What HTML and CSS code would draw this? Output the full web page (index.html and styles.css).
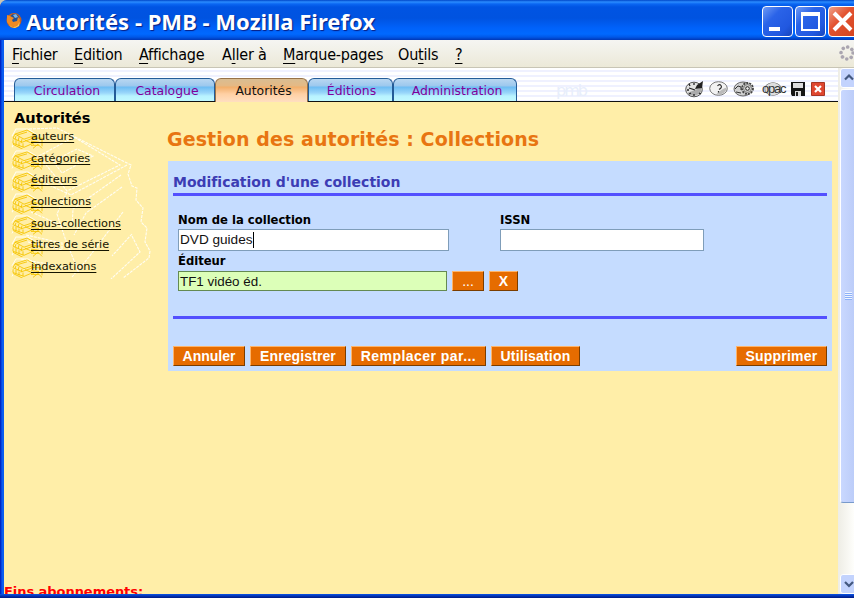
FILE: index.html
```html
<!DOCTYPE html>
<html lang="fr">
<head>
<meta charset="utf-8">
<title>Autorités - PMB - Mozilla Firefox</title>
<link rel="stylesheet" href="styles.css">
</head>
<body>
<div class="window">
  <header class="titlebar">
    <svg class="firefox" viewBox="0 0 18 18"><circle cx="9" cy="8.500" r="7.500" fill="#c9601c"/><circle cx="9.500" cy="7" r="5" fill="#1f4f96"/><path d="M2 3l3 1 2 1 2 1-2 2 1 2 4-1 1-4 2 2-1 5-4 3-5-1-3-4z" fill="#ef8a24"/><path d="M8 3l3-1 2 3-3 1z" fill="#7ab6e8"/><path d="M4 13q5 4 9 0l2-4-1 5-4 2-4-1z" fill="#ffd05a"/></svg>
    <h1>Autorités - PMB - Mozilla Firefox</h1>
    <div class="controls">
      <span class="control"><svg viewBox="0 0 31 32"><path d="M7 21h11v4H7z" fill="#fff"/></svg></span>
      <span class="control"><svg viewBox="0 0 31 32"><path d="M6 6h19v19H6zM8 10v13h15V10z" fill="#fff" fill-rule="evenodd"/></svg></span>
      <span class="control close"><svg viewBox="0 0 31 32"><path d="M6 7l17 17M23 7L6 24" stroke="#fff" stroke-width="4"/></svg></span>
    </div>
  </header>
  <nav class="menubar">
    <span class="m1"><u>F</u>ichier</span><span class="m2"><u>E</u>dition</span><span class="m3"><u>A</u>ffichage</span><span class="m4">A<u>l</u>ler à</span><span class="m5"><u>M</u>arque-pages</span><span class="m6">Ou<u>t</u>ils</span><span class="m7"><u>?</u></span>
    <svg class="throbber" viewBox="0 0 16 16"><circle cx="8" cy="8" r="6" fill="none" stroke="#aaa5b0" stroke-width="3.600" stroke-linecap="round" stroke-dasharray="0.010 4.702"/></svg>
  </nav>
  <div class="viewport">
    <div class="page">
      <div class="topbar">
        <nav class="tabs">
          <a class="tab t1">Circulation</a><a class="tab t2">Catalogue</a><a class="tab t3 active">Autorités</a><a class="tab t4">Éditions</a><a class="tab t5">Administration</a>
        </nav>
        <span class="ghost">pmb</span>
        <div class="tools">
          <svg class="i1" viewBox="0 0 20 18"><ellipse cx="9" cy="9.500" rx="8.300" ry="7.300" fill="#e2e2e2" stroke="#555"/><path d="M2 13q7 6 14-1l1-5-7 3z" fill="#aaa"/><path d="M10 9l2-4 6-4-1 7z" fill="#222"/><path d="M10 10L4 8M9 3v2M2 10h2M9 14v2M4 4l1 2M14 13l2 1M4 14l2-1" stroke="#222" stroke-width="1.300"/></svg>
          <svg class="i2" viewBox="0 0 20 18"><ellipse cx="9.500" cy="8.500" rx="8.800" ry="6.800" fill="#f2f2f2" stroke="#777"/><path d="M7 14.500q9 1 11-7-5 1-11 7z" fill="#bbb"/><path d="M8.500 6q2-2.500 3.500-.5t-2 4M9.500 11v1.500" fill="none" stroke="#333" stroke-width="1.200"/></svg>
          <svg class="i3" viewBox="0 0 22 18"><ellipse cx="10" cy="9" rx="9" ry="7" fill="#d0d0d0" stroke="#666"/><circle cx="14.500" cy="8.500" r="5.500" fill="#ddd" stroke="#444" stroke-width="1.800" stroke-dasharray="2 1"/><circle cx="14.500" cy="8.500" r="4" fill="#ccc" stroke="#666" stroke-width=".8"/><circle cx="14.500" cy="8.500" r="1.800" fill="#eee" stroke="#222"/><path d="M2 9l3-3 3 1v3M3 12l5 1" fill="none" stroke="#333"/></svg>
          <span class="opac">opac</span>
          <svg class="i5" viewBox="0 0 14 16"><path d="M0 1h14v14H1l-1-2z" fill="#151515"/><path d="M2 2h10v5H2zM4 10h6v5H4z" fill="#ddd"/><path d="M5 11h2v4H5z" fill="#222"/></svg>
          <svg class="i6" viewBox="0 0 14 14"><path d="M.5.500h13v13H.5z" fill="#df4630" stroke="#a73524"/><path d="M4 4l6 6M10 4l-6 6" stroke="#fff" stroke-width="2.200"/></svg>
        </div>
      </div>
      <div class="columns">
        <aside class="sidebar">
          <h2>Autorités</h2>
          <div class="links">
            <svg class="sketch" viewBox="0 0 145 152" fill="none" stroke="#fffdf2" stroke-width="1.100" stroke-dasharray="3 1"><path d="M18 2l28-1 74 37-3 9 4 12 5 2-1 12 7 8-2 14 6 6-2 14 5 9-1 7-26 20M116 38L60 68 20 50M28 29l35-19 46 28-53 26zM42 34l24-12 16 7-31 17zM110 48l-48 34-1 18M111 60L75 86l-12 22M112 85L78 130l-17 20M121 107l-20 22M56 65l-10 22 10 30M20 85l34 15M15 108l36 8v7l-34-8M10 132l47 9M56 116l12 30M121 109l8 16-29 27"/></svg>
            <ul>
              <li><a>auteurs</a></li><li><a>catégories</a></li><li><a>éditeurs</a></li><li><a>collections</a></li><li><a>sous-collections</a></li><li><a>titres de série</a></li><li><a>indexations</a></li>
            </ul>
          </div>
        </aside>
        <main>
          <h2 class="heading">Gestion des autorités : Collections</h2>
          <form class="panel">
            <h3>Modification d'une collection</h3>
            <div class="fields">
              <div class="field name"><label>Nom de la collection</label><div class="input">DVD guides<i class="caret"></i></div></div>
              <div class="field"><label>ISSN</label><div class="input issn"></div></div>
            </div>
            <div class="field publisher"><label>Éditeur</label>
              <div class="line"><div class="input green">TF1 vidéo éd.</div><button type="button" class="b-more">...</button><button type="button" class="b-x">X</button></div>
            </div>
            <div class="actions"><button type="button" class="b1">Annuler</button><button type="button" class="b2">Enregistrer</button><button type="button" class="b3">Remplacer par...</button><button type="button" class="b4">Utilisation</button><button type="button" class="b5">Supprimer</button></div>
          </form>
        </main>
      </div>
      <p class="alert">Fins abonnements:</p>
    </div>
    <div class="scrollbar">
      <span class="arrow"><svg viewBox="0 0 17 17"><path d="M5 10.500l4-4 4 4" fill="none" stroke="#43587f" stroke-width="2.200"/></svg></span>
      <span class="thumb"><i></i></span>
      <span class="arrow down"><svg viewBox="0 0 17 17"><path d="M5 7l4 4 4-4" fill="none" stroke="#43587f" stroke-width="2.200"/></svg></span>
    </div>
  </div>
</div>
</body>
</html>
```
FILE: styles.css
```css
* { box-sizing: border-box; }
body { margin: 0; overflow: hidden; font-family: "DejaVu Sans", sans-serif; background: #c9c5b5; }
h1, h2, h3, p, ul { margin: 0; padding: 0; }
svg { display: block; }
.window { width: 854px; height: 598px; display: flex; flex-direction: column; overflow: hidden; padding-left: 4px; border-radius: 7px 0 0 0; background: linear-gradient(90deg, #001bb8 0, #0030d0 1px, #0a5cf0 2px, #0a5cf0 4px); }
.titlebar { height: 40px; flex: none; margin-left: -4px; padding: 6px 0 0 5px; display: flex; border-radius: 7px 0 0 0; background: linear-gradient(#0046c8 0, #2b8cff 2px, #0a66f2 4px, #0054e3 7px, #0053e0 18px, #0062fa 28px, #0069ff 34px, #0058e8 37px, #0037b6 40px); overflow: hidden; }
.firefox { width: 18px; height: 18px; margin-top: 6px; flex: none; }
h1 { margin-left: 3px; width: 736px; flex: none; white-space: nowrap; font: bold 22px/31px "Noto Sans", sans-serif; letter-spacing: .02px; color: #fff; text-shadow: 1px 1px 1px #071d80; }
.controls { display: flex; gap: 2px; flex: none; }
.control { width: 31px; height: 31px; flex: none; border: 1px solid #fff; border-radius: 4px; background: linear-gradient(135deg, #6f9bf5, #2a63e8 35%, #2158e0 75%, #1645bc); }
.control svg { width: 31px; height: 32px; margin: -1px; }
.close { background: linear-gradient(135deg, #f0a088, #e35330 40%, #d3431e); }
.menubar { height: 28px; flex: none; display: flex; background: linear-gradient(#f5f5f2, #ece9d8); border-bottom: 1px solid #c8c5b5; font: 16px/29px "DejaVu Sans Condensed", "DejaVu Sans", sans-serif; font-stretch: condensed; letter-spacing: -.2px; color: #000; padding-left: 8px; }
.menubar span { white-space: nowrap; flex: none; }
.menubar u { text-underline-offset: 3px; text-decoration-thickness: 1px; }
.m1 { width: 62px; } .m2 { width: 65px; } .m3 { width: 83px; } .m4 { width: 61px; } .m5 { width: 115px; } .m6 { width: 57px; }
.throbber { width: 16px; height: 16px; margin: 5px 0 0 377px; flex: none; }
.viewport { height: 526px; display: flex; flex: none; }
.page { width: 834px; height: 526px; overflow: hidden; background: #ffeea8; flex: none; }
.topbar { height: 34px; display: flex; align-items: flex-end; padding-left: 10px; border-bottom: 1px solid #111; background: repeating-linear-gradient(#fff 0 2px, #eff1ff 2px 4px, #fff 4px 5px); }
.tabs { display: flex; height: 23px; }
.tab { height: 23px; border: 1px solid #245c98; border-bottom: 0; border-radius: 6px 6px 0 0; background: linear-gradient(#b9d7f1 0, #9cc8ee 7px, #6dbcf3 8px, #9ad7fa 14px, #b8f3ff 17px, #c0f8ff); color: #800099; font-size: 12.4px; line-height: 23px; text-align: center; white-space: nowrap; padding-left: 6px; }
.t1 { width: 101px; padding-left: 5px; } .t2 { width: 100px; padding-left: 4px; } .t3 { width: 93px; } .t4 { width: 85px; padding-left: 2px; } .t5 { width: 124px; padding-left: 4px; }
.active { height: 24px; color: #111; border-color: #987348; background: linear-gradient(#d9bd92 0, #e5b984 7px, #f1ae6a 8px, #ffd0a4 15px, #ffdfc1); padding-left: 4px; }
.ghost { font: 16px/20px "DejaVu Sans", sans-serif; letter-spacing: -2px; color: #e8eefb; margin-left: 39px; width: 129px; }
.tools { display: flex; height: 24px; align-items: center; }
.i1 { width: 20px; height: 18px; } .i2 { width: 20px; height: 18px; margin-left: 4px; } .i3 { width: 22px; height: 18px; margin-left: 4px; }
.opac { font: 13px/16px "Liberation Sans", sans-serif; letter-spacing: -1.2px; width: 23px; margin: 0 0 0 7px; color: #333; background: radial-gradient(ellipse 9px 7px at 11px 8px, #ddd 80%, #888 90%, transparent 100%); }
.i5 { width: 14px; height: 16px; margin-left: 6px; } .i6 { width: 14px; height: 14px; margin-left: 6px; }
.columns { display: flex; height: 482px; }
.sidebar { width: 164px; padding: 6px 0 0 7px; flex: none; }
.sidebar h2 { font-size: 14.6px; line-height: 19px; margin-left: 3px; color: #000; }
.links { position: relative; height: 152px; }
.sketch { position: absolute; left: 0; top: 0; width: 145px; height: 152px; }
.sidebar ul { position: relative; list-style: none; }
.sidebar li { height: 21.65px; padding-left: 20px; font-size: 11.3px; line-height: 20px; white-space: nowrap; background: url("data:image/svg+xml,%3Csvg xmlns='http://www.w3.org/2000/svg' width='34' height='22' fill='none'%3E%3Cpath d='M1 9L5 2l12 0 8 5M1 14l2-4M1 20l2-4' stroke='%23fffdf2'/%3E%3Cpath d='M4 7l12-4 9 5-12 4zM6 8l10-3M4 7l-2 4 9 4 14-5M2 12v4l11 4 9-4M2 17l10 5M5 9l-1 3M8 10l-1 4M11 12l-1 4M5 13v4M8 15v4M12 16v4M14 13l9 4M20 11h11v8M20 14l8 1M22 21l5-4 4 4M20 18h8' stroke='%23f5c400' stroke-width='.9'/%3E%3C/svg%3E") no-repeat 0 0; color: #151500; }
.sidebar a { text-decoration: underline; text-underline-offset: 2px; text-decoration-thickness: 1px; text-decoration-skip-ink: none; }
.heading { font-size: 19px; line-height: 24px; letter-spacing: .09px; color: #e87511; margin: 25px 0 0 -1px; white-space: nowrap; }
main { width: 664px; }
.panel { margin-top: 10px; height: 210px; background: #c5dcff; padding: 10px 5px 0; }
h3 { font-size: 14px; line-height: 22px; height: 25px; letter-spacing: -.02px; color: #3c3cb4; border-bottom: 3px solid #5350ff; white-space: nowrap; }
.fields { display: flex; margin: 16px 0 0 5px; }
.field label { display: block; font-size: 11.6px; line-height: 17px; font-weight: bold; color: #000; white-space: nowrap; }
.name { width: 322px; }
.input { width: 271px; height: 22px; border: 1px solid #7f9db9; background: #fff; padding-left: 1px; font: 13.6px/19px "Liberation Sans", sans-serif; color: #111; display: flex; align-items: flex-start; }
.issn { width: 204px; }
.caret { width: 1px; height: 16px; background: #000; margin-top: 2px; }
.publisher { margin: 2px 0 0 5px; }
.line { display: flex; height: 20px; margin-top: 1px; }
.green { width: 269px; height: 20px; background: #dcffb8; border-color: #648a52; font-size: 13.4px; }
button { height: 20px; padding: 0; border: 1px solid; border-color: #ffb468 #7a3d00 #7a3d00 #ffb468; background: #e66c00; color: #fff; font: bold 14px/18px "Liberation Sans", sans-serif; white-space: nowrap; }
.b-more { width: 32px; margin-left: 5px; font-weight: normal; } .b-x { width: 29px; margin-left: 5px; }
.actions { margin-top: 25px; border-top: 3px solid #5350ff; padding-top: 27px; display: flex; }
.b1 { width: 72px; margin-right: 5px; } .b2 { width: 96px; margin-right: 5px; letter-spacing: .1px; } .b3 { width: 135px; margin-right: 5px; letter-spacing: .45px; } .b4 { width: 89px; letter-spacing: .2px; } .b5 { width: 91px; margin-left: auto; letter-spacing: .2px; }
.alert { color: #f00; font-size: 13px; line-height: 16px; font-weight: bold; letter-spacing: -.05px; }
.scrollbar { width: 16px; background: linear-gradient(90deg, #eeede5, #fefefb); padding-left: 2px; display: flex; flex-direction: column; overflow: hidden; }
.arrow { width: 17px; height: 20px; border: 1px solid #fff; border-radius: 3px; background: #c3d3fd; }
.arrow svg { width: 17px; height: 17px; margin-left: -1px; }
.thumb { width: 17px; height: 414px; margin-top: 1px; border: 1px solid #fff; border-bottom-color: #789acb; border-radius: 3px; background: linear-gradient(90deg, #c9d8ff, #bacbf8); display: flex; align-items: center; justify-content: center; }
.thumb i { width: 7px; height: 8px; background: repeating-linear-gradient(#eef4ff 0 1px, #8cb0f8 1px 2px); }
.down { margin-top: auto; }
.window::after { content: ""; height: 4px; flex: none; margin-left: -4px; background: linear-gradient(#0b55e5, #0027a0 70%, #001b80); }
```
